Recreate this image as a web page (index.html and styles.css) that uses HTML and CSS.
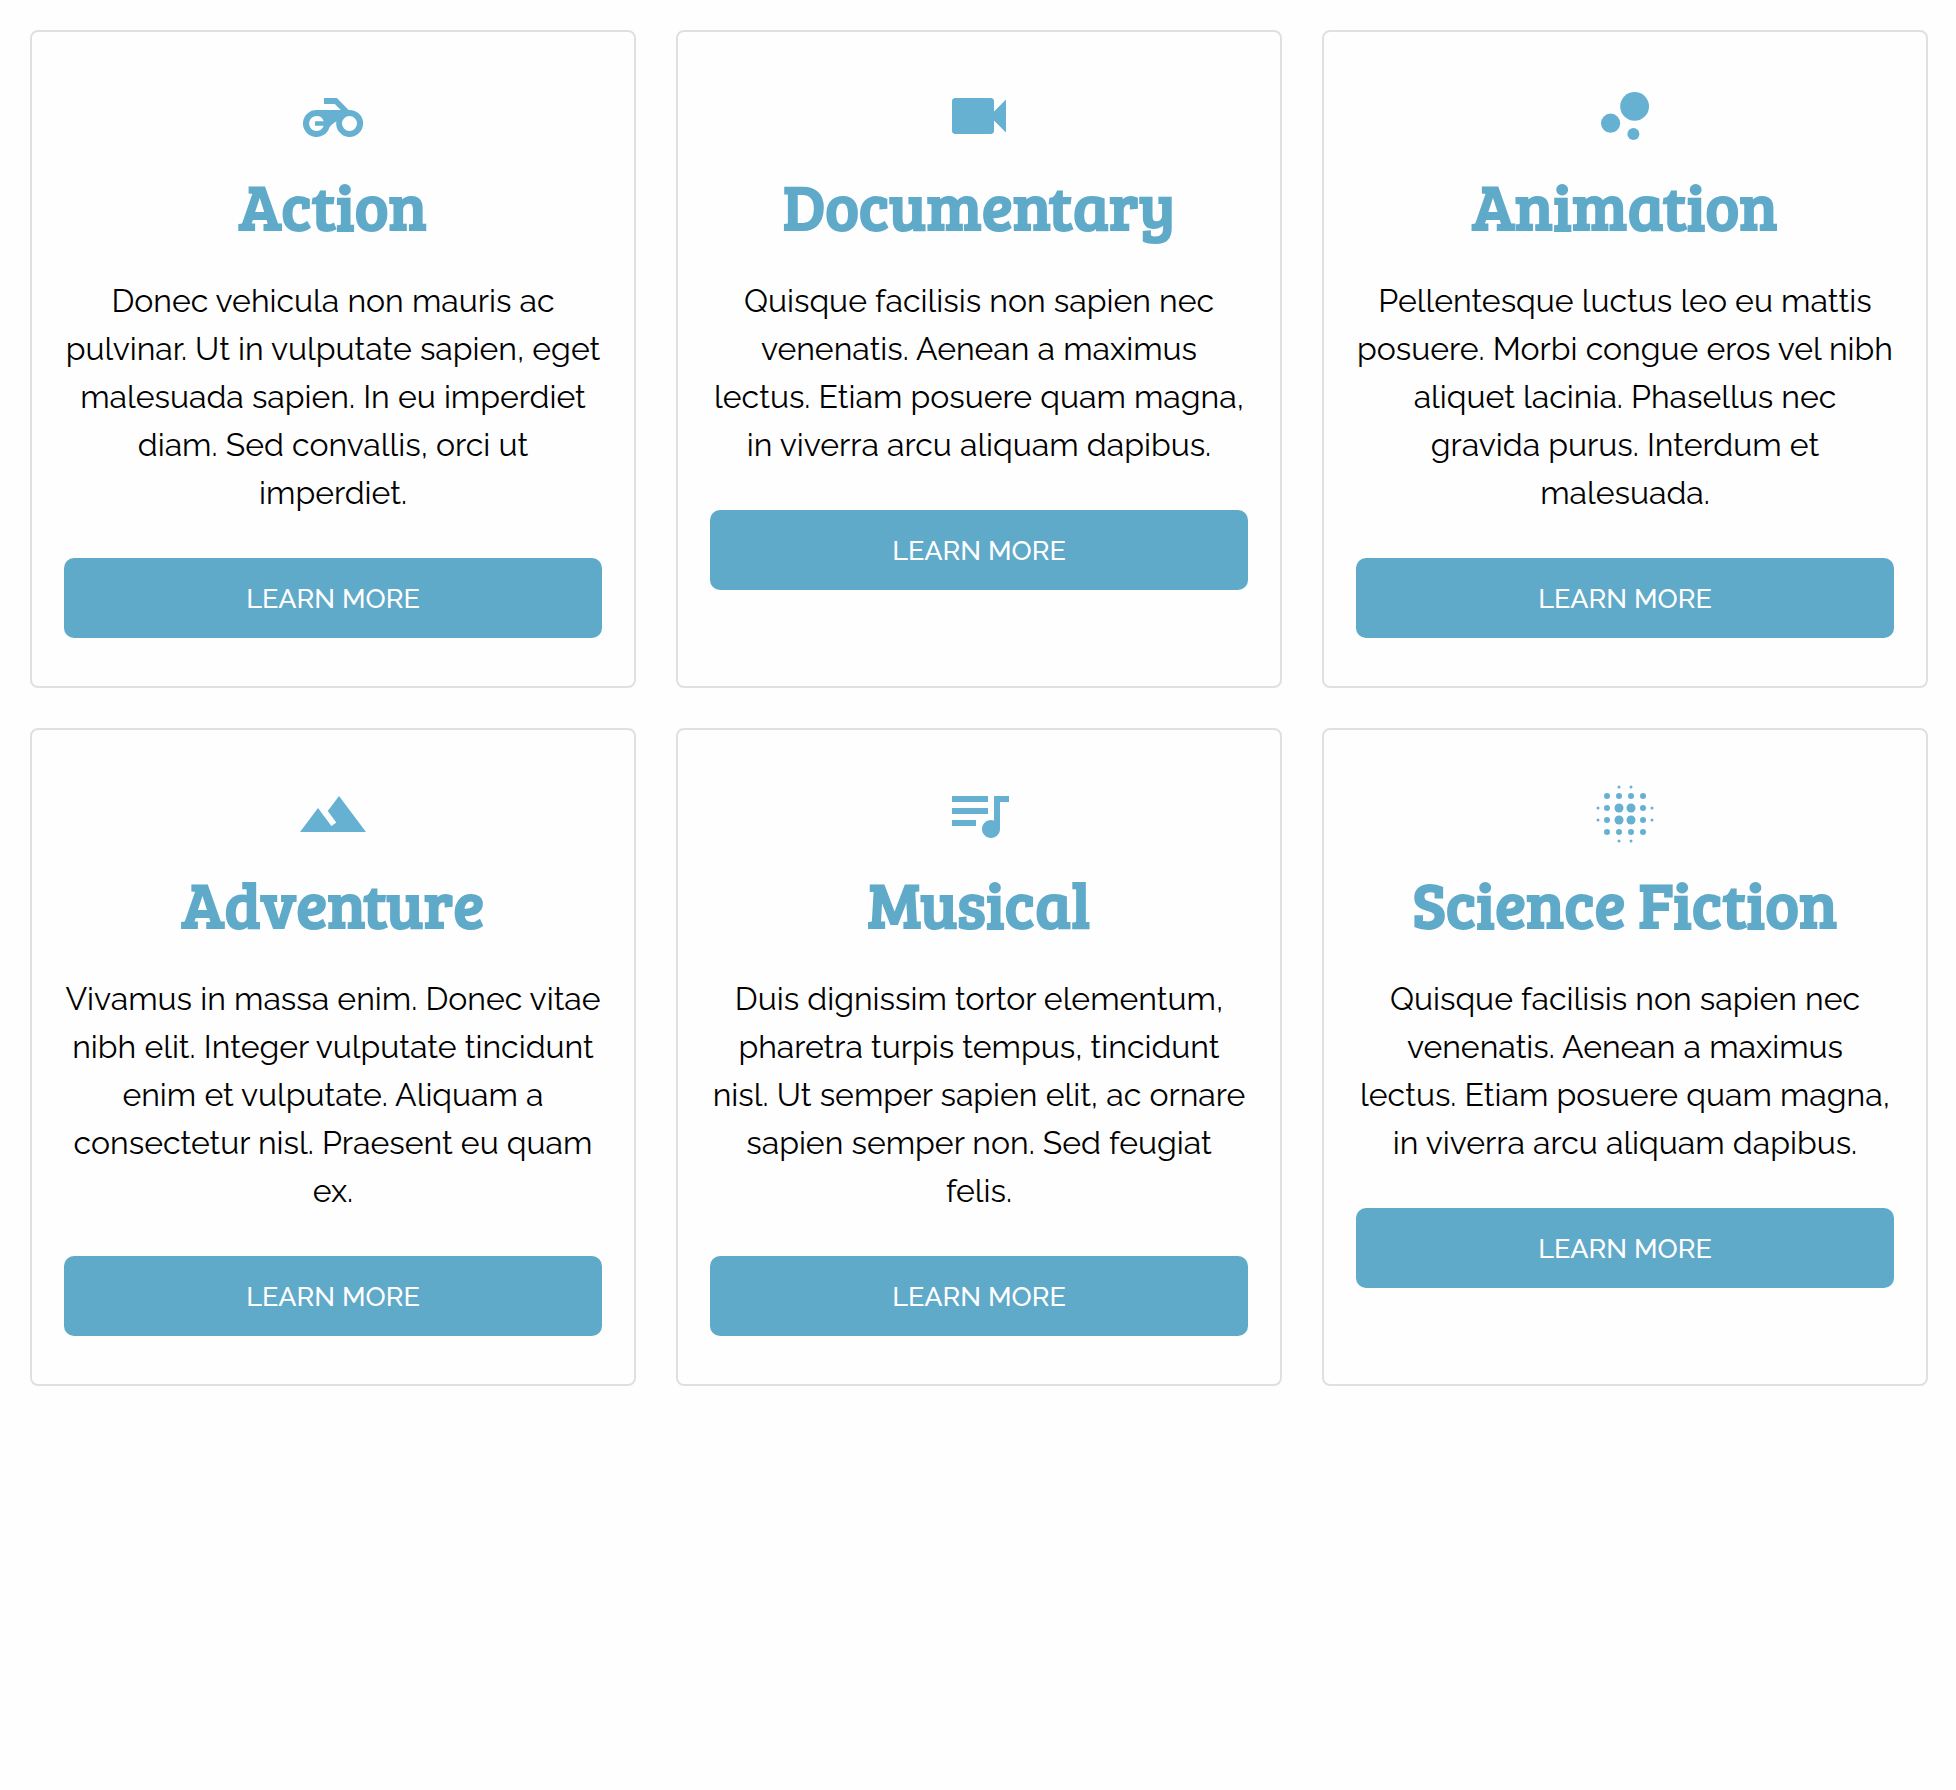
FILE: index.html
```html
<!DOCTYPE html>
<html lang="en">
<head>
<meta charset="utf-8">
<meta name="viewport" content="width=device-width, initial-scale=1">
<title>Genres</title>
<link rel="stylesheet" href="styles.css">
</head>
<body>
<main class="cards">
  <article class="card">
    <svg class="icon" viewBox="0 0 24 24" aria-hidden="true"><path fill-rule="evenodd" d="M9 6v2h3.600l2 2H6.500a4.500 4.500 0 1 0 4.300 5.800C11.200 14.900 12.200 14.400 13.100 13.800A4.500 4.500 0 1 0 17.200 10L13.300 6zM6.500 12a2.500 2.500 0 0 1 2.400 1.750H6v1.500h2.900A2.500 2.500 0 1 1 6.500 12zM17.500 12a2.500 2.500 0 1 1 0 5 2.500 2.500 0 0 1 0-5z"/></svg>
    <h2 class="title">Action</h2>
    <p class="text">Donec vehicula non mauris ac pulvinar. Ut in vulputate sapien, eget malesuada sapien. In eu imperdiet diam. Sed convallis, orci ut imperdiet.</p>
    <button class="button" type="button">LEARN MORE</button>
  </article>
  <article class="card">
    <svg class="icon" viewBox="0 0 24 24" aria-hidden="true"><path d="M17 10.500V7c0-.550-.450-1-1-1H4c-.550 0-1 .450-1 1v10c0 .550.450 1 1 1h12c.550 0 1-.450 1-1v-3.500l4 4v-11l-4 4z"/></svg>
    <h2 class="title">Documentary</h2>
    <p class="text">Quisque facilisis non sapien nec venenatis. Aenean a maximus lectus. Etiam posuere quam magna, in viverra arcu aliquam dapibus.</p>
    <button class="button" type="button">LEARN MORE</button>
  </article>
  <article class="card">
    <svg class="icon" viewBox="0 0 24 24" aria-hidden="true"><circle cx="7.200" cy="14.400" r="3.200"/><circle cx="14.800" cy="18" r="2"/><circle cx="15.200" cy="8.800" r="4.800"/></svg>
    <h2 class="title">Animation</h2>
    <p class="text">Pellentesque luctus leo eu mattis posuere. Morbi congue eros vel nibh aliquet lacinia. Phasellus nec gravida purus. Interdum et malesuada.</p>
    <button class="button" type="button">LEARN MORE</button>
  </article>
  <article class="card">
    <svg class="icon" viewBox="0 0 24 24" aria-hidden="true"><path d="M14 6l-3.750 5 2.850 3.800-1.600 1.200C9.810 13.750 7 10 7 10l-6 8h22L14 6z"/></svg>
    <h2 class="title">Adventure</h2>
    <p class="text">Vivamus in massa enim. Donec vitae nibh elit. Integer vulputate tincidunt enim et vulputate. Aliquam a consectetur nisl. Praesent eu quam ex.</p>
    <button class="button" type="button">LEARN MORE</button>
  </article>
  <article class="card">
    <svg class="icon" viewBox="0 0 24 24" aria-hidden="true"><path d="M15 6H3v2h12V6zm0 4H3v2h12v-2zM3 16h8v-2H3v2zM17 6v8.180c-.310-.110-.650-.180-1-.180-1.660 0-3 1.340-3 3s1.340 3 3 3 3-1.340 3-3V8h3V6h-5z"/></svg>
    <h2 class="title">Musical</h2>
    <p class="text">Duis dignissim tortor elementum, pharetra turpis tempus, tincidunt nisl. Ut semper sapien elit, ac ornare sapien semper non. Sed feugiat felis.</p>
    <button class="button" type="button">LEARN MORE</button>
  </article>
  <article class="card">
    <svg class="icon" viewBox="0 0 24 24" aria-hidden="true">
      <circle cx="10" cy="10" r="1.500"/><circle cx="14" cy="10" r="1.500"/><circle cx="10" cy="14" r="1.500"/><circle cx="14" cy="14" r="1.500"/>
      <circle cx="6" cy="6" r="1"/><circle cx="10" cy="6" r="1"/><circle cx="14" cy="6" r="1"/><circle cx="18" cy="6" r="1"/>
      <circle cx="6" cy="10" r="1"/><circle cx="18" cy="10" r="1"/><circle cx="6" cy="14" r="1"/><circle cx="18" cy="14" r="1"/>
      <circle cx="6" cy="18" r="1"/><circle cx="10" cy="18" r="1"/><circle cx="14" cy="18" r="1"/><circle cx="18" cy="18" r="1"/>
      <circle cx="10" cy="3" r=".5"/><circle cx="14" cy="3" r=".5"/><circle cx="10" cy="21" r=".5"/><circle cx="14" cy="21" r=".5"/>
      <circle cx="3" cy="10" r=".5"/><circle cx="3" cy="14" r=".5"/><circle cx="21" cy="10" r=".5"/><circle cx="21" cy="14" r=".5"/>
    </svg>
    <h2 class="title">Science Fiction</h2>
    <p class="text">Quisque facilisis non sapien nec venenatis. Aenean a maximus lectus. Etiam posuere quam magna, in viverra arcu aliquam dapibus.</p>
    <button class="button" type="button">LEARN MORE</button>
  </article>
</main>
</body>
</html>
```
FILE: styles.css
```css
* {
  box-sizing: border-box;
}

body {
  margin: 0;
  background: #fefefe;
  color: #000;
  font-family: Raleway, Lato, sans-serif;
}

.cards {
  display: grid;
  grid-template-columns: repeat(auto-fit, minmax(560px, 1fr));
  gap: 40px;
  padding: 30px 28px 30px 30px;
}

.card {
  display: flex;
  flex-direction: column;
  align-items: center;
  padding: 48px 32px;
  border: 2px solid #e0e0e0;
  border-radius: 8px;
  text-align: center;
}

.icon {
  width: 72px;
  height: 72px;
  fill: #66b1d2;
}

.title {
  margin: 15px 0 34px;
  color: #5fa9c9;
  font-family: "Bree Serif", "DejaVu Serif", serif;
  font-size: 64px;
  font-weight: 700;
  line-height: 76px;
  white-space: nowrap;
}

.text {
  margin: 0 0 41px;
  font-size: 32px;
  line-height: 48px;
}

.button {
  width: 100%;
  height: 80px;
  padding: 0;
  border: 0;
  border-radius: 10px;
  background: #5fa9c9;
  color: #fff;
  font: 500 27px Raleway, Lato, sans-serif;
  cursor: pointer;
}
```
